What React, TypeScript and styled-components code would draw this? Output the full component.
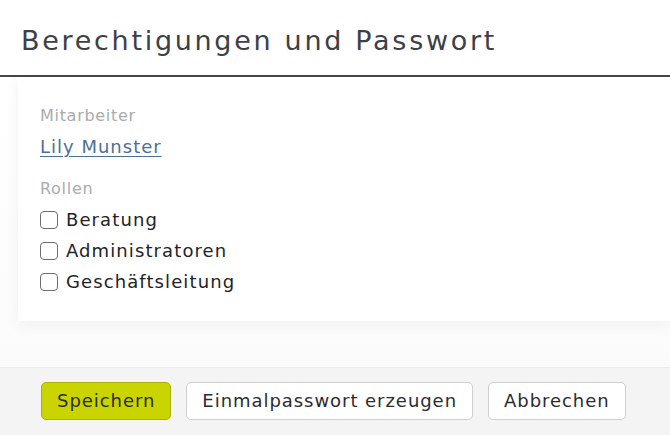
import React from "react";
import styled, { createGlobalStyle } from "styled-components";

const Global = createGlobalStyle`
  html, body { margin: 0; padding: 0; background: #ffffff; }
  body { font-family: "DejaVu Sans", "Open Sans", sans-serif; }
  * { box-sizing: border-box; }
`;

const Page = styled.div`
  width: 670px;
  height: 435px;
  display: flex;
  flex-direction: column;
  overflow: hidden;
  background: #fafafa;
`;

const Header = styled.header`
  height: 77px;
  background: #ffffff;
  border-bottom: 2px solid #45474b;
  padding: 23px 0 0 21px;
`;

const Title = styled.h1`
  margin: 0;
  font-weight: 400;
  font-size: 27px;
  line-height: 36px;
  color: #3d4046;
  letter-spacing: 2.7px;
`;

const Body = styled.main`
  flex: 1;
  padding: 0 0 0 18px;
  background: linear-gradient(#ffffff, #fbfbfb);
`;

const Card = styled.section`
  height: 244px;
  background: #ffffff;
  box-shadow: 0 4px 14px rgba(0, 0, 0, 0.05);
  padding: 29px 0 0 22px;
  display: flex;
  flex-direction: column;
`;

const Label = styled.div`
  font-size: 16px;
  line-height: 20px;
  color: #a9abae;
  letter-spacing: 0.7px;
`;

const NameLink = styled.a`
  margin-top: 9px;
  font-size: 18px;
  line-height: 24px;
  color: #4e6f94;
  text-decoration: underline;
  text-underline-offset: 3px;
  letter-spacing: 1px;
  align-self: flex-start;
  cursor: pointer;
`;

const RolesLabel = styled(Label)`
  margin-top: 20px;
`;

const RoleList = styled.div`
  margin-top: 9px;
  display: flex;
  flex-direction: column;
  gap: 7px;
`;

const RoleRow = styled.label`
  display: flex;
  align-items: center;
  gap: 8px;
  font-size: 18px;
  line-height: 24px;
  color: #222327;
  letter-spacing: 1.1px;
`;

const Box = styled.span`
  width: 18px;
  height: 18px;
  border: 1.5px solid #6b6d70;
  border-radius: 4px;
  background: #fff;
  flex: none;
`;

const Footer = styled.footer`
  height: 68px;
  background: #f4f4f4;
  border-top: 1px solid #f3efc6;
  display: flex;
  align-items: center;
  gap: 15px;
  padding: 0 0 2px 41px;
`;

const Button = styled.button<{ $primary?: boolean }>`
  height: 38px;
  padding: 0 15px;
  font-family: inherit;
  font-size: 18px;
  letter-spacing: 0.95px;
  color: #2b2c2f;
  border-radius: 5px;
  border: 1px solid ${(p) => (p.$primary ? "#a9b400" : "#cfcfcf")};
  background: ${(p) => (p.$primary ? "#c9d400" : "#ffffff")};
  cursor: pointer;
`;

const roles = ["Beratung", "Administratoren", "Geschäftsleitung"];

export default function App() {
  return (
    <Page>
      <Global />
      <Header>
        <Title>Berechtigungen und Passwort</Title>
      </Header>
      <Body>
        <Card>
          <Label>Mitarbeiter</Label>
          <NameLink>Lily Munster</NameLink>
          <RolesLabel>Rollen</RolesLabel>
          <RoleList>
            {roles.map((r) => (
              <RoleRow key={r}>
                <Box />
                {r}
              </RoleRow>
            ))}
          </RoleList>
        </Card>
      </Body>
      <Footer>
        <Button $primary>Speichern</Button>
        <Button>Einmalpasswort erzeugen</Button>
        <Button>Abbrechen</Button>
      </Footer>
    </Page>
  );
}
